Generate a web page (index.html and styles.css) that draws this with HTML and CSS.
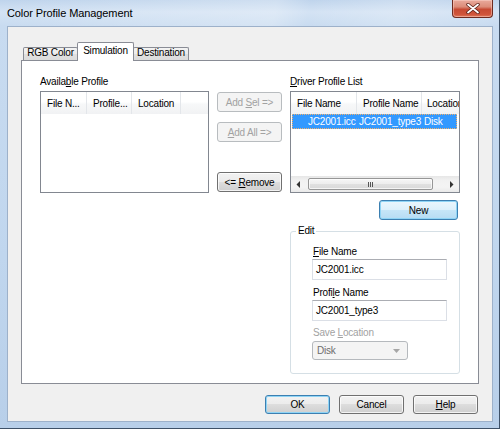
FILE: index.html
```html
<!DOCTYPE html>
<html>
<head>
<meta charset="utf-8">
<link rel="stylesheet" href="styles.css">
</head>
<body>
<div class="window">
  <div class="titlebar">
    <span class="title">Color Profile Management</span>
    <div class="close">
      <svg width="16" height="11" viewBox="0 0 16 11"><path d="M3 1.5 L8 5.5 L13 1.5 M3 9.5 L8 5.5 L13 9.5" stroke="#5a1f16" stroke-width="3.4" fill="none" stroke-linecap="round"/><path d="M3 1.5 L8 5.5 L13 1.5 M3 9.5 L8 5.5 L13 9.5" stroke="#fff" stroke-width="1.8" fill="none" stroke-linecap="round"/></svg>
    </div>
  </div>
  <div class="client">
    <div class="tabstrip">
      <div class="tab tab-rgb">RGB Color</div>
      <div class="tab tab-sim active">Simulation</div>
      <div class="tab tab-dest">Destination</div>
    </div>
    <div class="panel">
      <div class="col col-left">
        <div class="label">Availa<u>b</u>le Profile</div>
        <div class="list">
          <div class="lhead">
            <div class="hc" style="width:46px">File N...</div>
            <div class="hc" style="width:45px">Profile...</div>
            <div class="hc" style="width:49px">Location</div>
            <div class="hc hc-rest"></div>
          </div>
          <div class="lbody"></div>
        </div>
      </div>
      <div class="col col-mid">
        <div class="btn disabled b-addsel"><span>Add <u>S</u>el =&gt;</span></div>
        <div class="btn disabled b-addall"><span><u>A</u>dd All =&gt;</span></div>
        <div class="btn b-remove"><span>&lt;= <u>R</u>emove</span></div>
      </div>
      <div class="col col-right">
        <div class="label"><u>D</u>river Profile List</div>
        <div class="list">
          <div class="lhead">
            <div class="hc" style="width:66px">File Name</div>
            <div class="hc" style="width:65px">Profile Name</div>
            <div class="hc hc-rest">Location</div>
          </div>
          <div class="lbody">
            <div class="row sel">
              <span class="c1">JC2001.icc</span><span class="c2">JC2001_type3</span><span class="c3">Disk</span>
            </div>
          </div>
          <div class="hscroll">
            <div class="arrow">
              <svg width="5" height="7" viewBox="0 0 5 7"><path d="M4 0 L0.5 3.5 L4 7 Z" fill="#333"/></svg>
            </div>
            <div class="track">
              <div class="thumb"><span class="grip"></span><span class="grip"></span><span class="grip"></span></div>
            </div>
            <div class="arrow">
              <svg width="5" height="7" viewBox="0 0 5 7"><path d="M1 0 L4.5 3.5 L1 7 Z" fill="#333"/></svg>
            </div>
          </div>
        </div>
        <div class="btn default b-new"><span>New</span></div>
        <fieldset class="group">
          <legend>Edit</legend>
          <div class="gbody">
            <div class="flabel"><u>F</u>ile Name</div>
            <div class="input">JC2001.icc</div>
            <div class="flabel fl2">Profi<u>l</u>e Name</div>
            <div class="input">JC2001_type3</div>
            <div class="flabel fl3 dim">Save <u>L</u>ocation</div>
            <div class="combo">
              <span>Disk</span>
              <svg width="7" height="4" viewBox="0 0 7 4"><path d="M0 0 L7 0 L3.5 4 Z" fill="#a6a6a6"/></svg>
            </div>
          </div>
        </fieldset>
      </div>
    </div>
    <div class="footer">
      <div class="btn fbtn default"><span>OK</span></div>
      <div class="btn fbtn"><span>Cancel</span></div>
      <div class="btn fbtn"><span><u>H</u>elp</span></div>
    </div>
  </div>
</div>
</body>
</html>
```

FILE: styles.css
```css
* { box-sizing: border-box; }
html, body { margin: 0; padding: 0; }
body {
  font-family: "Liberation Sans", Arial, sans-serif;
  font-size: 10px;
  letter-spacing: -0.2px;
  color: #000;
  background: #fff;
}
u { text-decoration: underline; text-underline-offset: 1px; }

.window {
  width: 500px;
  height: 429px;
  padding: 0 6px 6px 7px;
  background: linear-gradient(180deg, #bfd4ec 0, #d4e3f4 12px, #c8dbf0 26px, #c0d6ee 60%, #b8cfe9 100%);
  border-right: 1px solid #3e5168;
  border-bottom: 1px solid #3e5168;
  display: flex;
  flex-direction: column;
}

.titlebar {
  height: 26px;
  display: flex;
  justify-content: space-between;
  align-items: flex-start;
  background: linear-gradient(100deg, rgba(255,255,255,0) 0, rgba(255,255,255,0.25) 55%, rgba(255,255,255,0) 62%, rgba(255,255,255,0.2) 80%, rgba(255,255,255,0) 100%);
}
.title {
  padding-top: 7px;
  font-size: 11px;
  line-height: 13px;
  letter-spacing: -0.1px;
}
.close {
  width: 41px;
  height: 18px;
  border: 1px solid #6e2b20;
  border-top: none;
  border-radius: 0 0 4px 4px;
  background: linear-gradient(180deg, #e9aa9c 0, #dc8c79 40%, #c74a33 55%, #d0553b 85%, #e07a5c 100%);
  box-shadow: inset 0 0 0 1px rgba(255,220,210,0.45);
  display: flex;
  align-items: center;
  justify-content: center;
}

.client {
  width: 486px;
  height: 396px;
  border: 1px solid #9db1ca;
  background: #f0f0f0;
  padding: 15px 13px 0 13px;
  display: flex;
  flex-direction: column;
}

/* tabs */
.tabstrip {
  height: 18px;
  display: flex;
  align-items: flex-end;
  padding-left: 2px;
}
.tab {
  height: 13px;
  border: 1px solid #898c95;
  border-bottom: none;
  line-height: 10px;
  text-align: center;
  background: linear-gradient(180deg, #f3f3f3 0, #ebebeb 50%, #e0e0e0 51%, #dcdcdc 100%);
  border-radius: 2px 2px 0 0;
}
.tab-rgb { width: 55px; }
.tab-sim { width: 57px; margin-left: -1px; }
.tab-dest { width: 56px; margin-left: -1px; }
.tab.active {
  height: 19px;
  margin-bottom: -1px;
  padding-top: 3px;
  background: #fff;
  position: relative;
  z-index: 1;
}

.panel {
  height: 324px;
  border: 1px solid #898c95;
  background: #fff;
  padding: 15px 0 0 18px;
  display: flex;
  align-items: flex-start;
}
.col { display: flex; flex-direction: column; }
.col-left { width: 169px; }
.col-mid { width: 65px; margin-left: 8px; padding-top: 16px; }
.col-right { width: 170px; margin-left: 8px; }

.label { height: 12px; line-height: 12px; }

.list {
  margin-top: 3px;
  height: 102px;
  border: 1px solid #828790;
  background: #fff;
  display: flex;
  flex-direction: column;
  overflow: hidden;
}
.lhead {
  height: 22px;
  display: flex;
  flex-shrink: 0;
  background: linear-gradient(180deg, #ffffff 0, #ffffff 45%, #f7f8f9 55%, #f1f2f4 100%);
}
.hc {
  flex-shrink: 0;
  height: 22px;
  line-height: 20px;
  padding: 2px 0 0 6px;
  border-right: 1px solid #e3e6ea;
  white-space: nowrap;
  overflow: hidden;
}
.hc-rest { flex: 1; border-right: none; padding-left: 5px; }
.lbody { flex: 1; }

.row {
  height: 15px;
  line-height: 15px;
  margin: 0 1px 0 1px;
  width: 165px;
  white-space: nowrap;
  display: flex;
}
.row.sel {
  background: #3399ff;
  color: #fff;
  outline: 1px dotted #f1b06c;
  outline-offset: -1px;
}
.c1 { width: 65px; padding-left: 16px; overflow: visible; }
.c2 { width: 65px; padding-left: 2px; }
.c3 { padding-left: 2px; }

.hscroll {
  height: 16px;
  flex-shrink: 0;
  display: flex;
  align-items: center;
  background: linear-gradient(180deg, #e6e6e6 0, #f2f2f2 30%, #f4f4f4 70%, #e9e9e9 100%);
}
.arrow {
  width: 15px;
  height: 16px;
  display: flex;
  align-items: center;
  justify-content: center;
  flex-shrink: 0;
}
.track { flex: 1; padding: 0 2px; height: 16px; display: flex; align-items: center; }
.thumb {
  width: 125px;
  height: 12px;
  border: 1px solid #979797;
  border-radius: 2px;
  background: linear-gradient(180deg, #f6f6f6 0, #ededed 50%, #e0e0e0 51%, #d9d9d9 100%);
  box-shadow: inset 0 0 0 1px rgba(255,255,255,0.7);
  display: flex;
  justify-content: center;
  align-items: center;
  gap: 1px;
}
.grip { width: 1px; height: 5px; background: #555; }

/* buttons */
.btn {
  height: 20px;
  border: 1px solid #707070;
  border-radius: 3px;
  background: linear-gradient(180deg, #f2f2f2 0, #ebebeb 49%, #dddddd 50%, #cfcfcf 100%);
  box-shadow: inset 0 0 0 1px rgba(255,255,255,0.75);
  display: flex;
  align-items: center;
  justify-content: center;
  white-space: nowrap;
  flex-shrink: 0;
}
.btn.disabled {
  border-color: #b8bcbf;
  background: #f4f4f4;
  color: #a2a2a2;
  box-shadow: none;
}
.btn.default {
  border-color: #3c7fb1;
  box-shadow: inset 0 0 0 1px #8fd4f5;
}
.b-addall { margin-top: 10px; }
.b-remove { margin-top: 30px; }
.b-new {
  width: 79px;
  margin-top: 7px;
  margin-right: 2px;
  align-self: flex-end;
  background: linear-gradient(180deg, #eaf6fd 0, #dcf0fb 49%, #c6e6f8 50%, #b6dcf3 100%);
}

/* group */
.group {
  margin: 5px 0 0 0;
  padding: 9px 0 13px 0;
  border: 1px solid #d5dfe5;
  border-radius: 3px;
  min-width: 0;
}
.group legend {
  padding: 0 2px;
  margin-left: 5px;
  line-height: 12px;
}
.gbody { padding-left: 21px; }
.flabel { height: 12px; line-height: 12px; padding-left: 1px; }
.fl2 { margin-top: 7px; }
.fl3 { margin-top: 6px; }
.dim { color: #a2a2a2; }
.input {
  margin-top: 1px;
  width: 135px;
  height: 21px;
  border: 1px solid #dbdfe6;
  border-top-color: #abadb3;
  background: #fff;
  padding: 0 0 0 3px;
  line-height: 19px;
}
.combo {
  margin-top: 2px;
  width: 96px;
  height: 19px;
  border: 1px solid #b5b9bd;
  border-radius: 3px;
  background: #f4f4f4;
  color: #6d6d6d;
  display: flex;
  align-items: center;
  justify-content: space-between;
  padding: 0 7px 0 4px;
}

/* footer */
.footer {
  margin-top: 11px;
  margin-right: 1px;
  display: flex;
  justify-content: flex-end;
  gap: 9px;
}
.fbtn { width: 65px; height: 19px; }
```
